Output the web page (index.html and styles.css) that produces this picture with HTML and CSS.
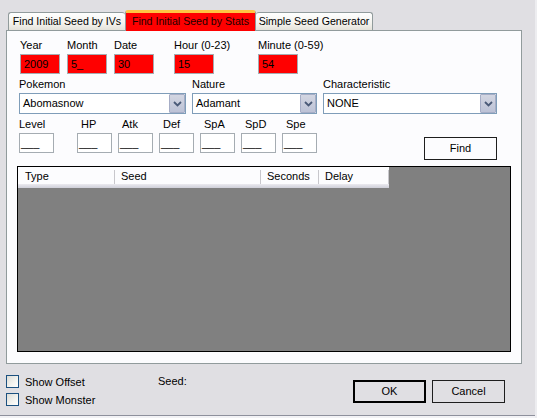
FILE: index.html
```html
<!DOCTYPE html>
<html>
<head>
<meta charset="utf-8">
<link rel="stylesheet" href="styles.css">
</head>
<body>
<div class="window">
  <div class="tabs">
    <div class="tab tab-ivs">Find Initial Seed by IVs</div>
    <div class="tab tab-active">Find Initial Seed by Stats</div>
    <div class="tab tab-simple">Simple Seed Generator</div>
  </div>
  <div class="panel">
    <div class="row-date">
      <div class="field"><div class="label">Year</div><div class="input red">2009</div></div>
      <div class="field"><div class="label">Month</div><div class="input red">5_</div></div>
      <div class="field"><div class="label">Date</div><div class="input red">30</div></div>
      <div class="field"><div class="label">Hour (0-23)</div><div class="input red">15</div></div>
      <div class="field"><div class="label">Minute (0-59)</div><div class="input red">54</div></div>
    </div>
    <div class="row-combo">
      <div class="field combo-pokemon"><div class="label">Pokemon</div>
        <div class="combo"><span class="combo-text">Abomasnow</span><span class="combo-btn"><svg width="9" height="6" viewBox="0 0 9 6"><polyline points="1,1 4.5,4.5 8,1" fill="none" stroke="#4a5a78" stroke-width="1.8"/></svg></span></div></div>
      <div class="field combo-nature"><div class="label">Nature</div>
        <div class="combo"><span class="combo-text">Adamant</span><span class="combo-btn"><svg width="9" height="6" viewBox="0 0 9 6"><polyline points="1,1 4.5,4.5 8,1" fill="none" stroke="#4a5a78" stroke-width="1.8"/></svg></span></div></div>
      <div class="field combo-char"><div class="label">Characteristic</div>
        <div class="combo"><span class="combo-text">NONE</span><span class="combo-btn"><svg width="9" height="6" viewBox="0 0 9 6"><polyline points="1,1 4.5,4.5 8,1" fill="none" stroke="#4a5a78" stroke-width="1.8"/></svg></span></div></div>
    </div>
    <div class="row-stats">
      <div class="field stat stat-level"><div class="label">Level</div><div class="input stat-input">___</div></div>
      <div class="field stat"><div class="label stat-label">HP</div><div class="input stat-input">___</div></div>
      <div class="field stat"><div class="label stat-label">Atk</div><div class="input stat-input">___</div></div>
      <div class="field stat"><div class="label stat-label">Def</div><div class="input stat-input">___</div></div>
      <div class="field stat"><div class="label stat-label">SpA</div><div class="input stat-input">___</div></div>
      <div class="field stat"><div class="label stat-label">SpD</div><div class="input stat-input">___</div></div>
      <div class="field stat"><div class="label stat-label">Spe</div><div class="input stat-input">___</div></div>
      <div class="button find">Find</div>
    </div>
    <div class="list">
      <div class="list-header">
        <div class="col col-type">Type</div>
        <div class="col col-seed">Seed</div>
        <div class="col col-seconds">Seconds</div>
        <div class="col col-delay">Delay</div>
      </div>
    </div>
  </div>
  <div class="footer">
    <div class="checks">
      <div class="check-row"><span class="checkbox"></span><span>Show Offset</span></div>
      <div class="check-row"><span class="checkbox"></span><span>Show Monster</span></div>
    </div>
    <div class="seed-label">Seed:</div>
    <div class="button ok">OK</div>
    <div class="button cancel">Cancel</div>
  </div>
  <div class="bottom-line"></div>
</div>
</body>
</html>
```
FILE: styles.css
```css
* { box-sizing: border-box; }
html, body { margin: 0; padding: 0; }
body {
  font-family: "Liberation Sans", Arial, sans-serif;
  font-size: 11px;
  color: #000;
  background: #e0dfe3;
}
.window {
  width: 537px;
  height: 418px;
  background: #e0dfe3;
  border-right: 2px solid #ededf0;
  display: flex;
  flex-direction: column;
  overflow: hidden;
}
.tabs {
  display: flex;
  align-items: flex-end;
  height: 30px;
  padding-left: 8px;
}
.tab {
  height: 18px;
  line-height: 17px;
  font-size: 10.6px;
  text-align: center;
  white-space: nowrap;
  border: 1px solid #919b9c;
  border-bottom: none;
  border-radius: 3px 3px 0 0;
  background: linear-gradient(#ffffff, #f4f3ee 60%, #e4e2da);
}
.tab-ivs { width: 117px; border-right: none; }
.tab-simple { width: 117px; border-left: none; }
.tab-active {
  width: 131px;
  height: 21px;
  margin-bottom: -1px;
  line-height: 17px;
  background: #ff0000;
  color: #1a0000;
  border-top: 3px solid #ffc444;
  position: relative;
  z-index: 1;
}
.panel {
  margin-left: 6px;
  width: 516px;
  height: 334px;
  background: #fcfcfe;
  border: 1px solid #919b9c;
  padding: 8px 24px 0 12px;
  display: flex;
  flex-direction: column;
}
.field { display: flex; flex-direction: column; }
.label { line-height: 13px; height: 13px; margin-bottom: 2px; white-space: nowrap; }
.input {
  height: 20px;
  line-height: 18px;
  border: 1px solid #a5acb2;
  background: #fff;
  padding-left: 3px;
  white-space: nowrap;
}
.input.red { background: #ff0000; width: 40px; }
.row-date {
  display: grid;
  grid-template-columns: 47px 47px 60px 84px auto;
  padding-left: 1px;
}
.row-combo {
  display: flex;
  gap: 6px;
  margin-top: 4px;
}
.combo-pokemon { width: 167px; }
.combo-nature { width: 125px; }
.combo-char { width: 174px; }
.combo {
  height: 21px;
  border: 1px solid #7f9db9;
  background: #fff;
  display: flex;
  align-items: stretch;
}
.combo-text { flex: 1; line-height: 19px; padding-left: 3px; }
.combo-btn {
  width: 16px;
  background: linear-gradient(#d3d6e2, #bcc2d6);
  border: 1px solid #a6adc6;
  border-radius: 1px;
  display: flex;
  align-items: center;
  justify-content: center;
}
.row-stats {
  display: flex;
  gap: 6px;
  margin-top: 4px;
  align-items: flex-start;
}
.stat { width: 35px; }
.stat-level { margin-right: 17px; }
.stat-label { padding-left: 4px; }
.stat-input { width: 35px; padding-left: 1px; }
.button {
  border: 1px solid #1e1e1e;
  background: #fcfcfe;
  text-align: center;
  white-space: nowrap;
}
.find {
  margin-left: auto;
  margin-top: 19px;
  width: 73px;
  height: 23px;
  line-height: 21px;
}
.list {
  margin-top: 6px;
  margin-left: -2px;
  width: 494px;
  height: 186px;
  border: 1px solid #000;
  background: #808080;
}
.list-header {
  display: flex;
  width: 371px;
  height: 21px;
  background: linear-gradient(#fcfcfe 0, #fcfcfe 17px, #ebeaef 17px, #dcdce4 19px, #cfcfd8 21px);
}
.col {
  line-height: 17px;
  padding-left: 6px;
  padding-top: 1px;
  white-space: nowrap;
  background: linear-gradient(#c8c7cc, #c8c7cc) right 3px / 1px 14px no-repeat;
}
.col-type { width: 97px; padding-left: 7px; }
.col-seed { width: 146px; }
.col-seconds { width: 58px; }
.col-delay { width: 70px; }
.footer {
  height: 51px;
  display: flex;
  align-items: flex-start;
  padding-top: 11px;
}
.checks {
  width: 158px;
  padding-left: 6px;
  display: flex;
  flex-direction: column;
  gap: 5px;
}
.check-row {
  display: flex;
  align-items: center;
  height: 13px;
  gap: 6px;
  white-space: nowrap;
}
.checkbox {
  width: 13px;
  height: 13px;
  border: 1px solid #1c5180;
  background: linear-gradient(135deg, #dcdcd7, #f4f4f0 60%, #ffffff);
  flex: none;
}
.seed-label { line-height: 13px; width: 195px; }
.ok {
  margin-top: 5px;
  width: 73px;
  height: 23px;
  line-height: 19px;
  border: 2px solid #000;
  background: #e0dfe3;
}
.cancel {
  margin-top: 5px;
  margin-left: 6px;
  width: 73px;
  height: 23px;
  line-height: 21px;
  background: #e0dfe3;
}
.bottom-line {
  height: 3px;
  border-top: 1px solid #8e909c;
  background: #f2f2f5;
}
```
